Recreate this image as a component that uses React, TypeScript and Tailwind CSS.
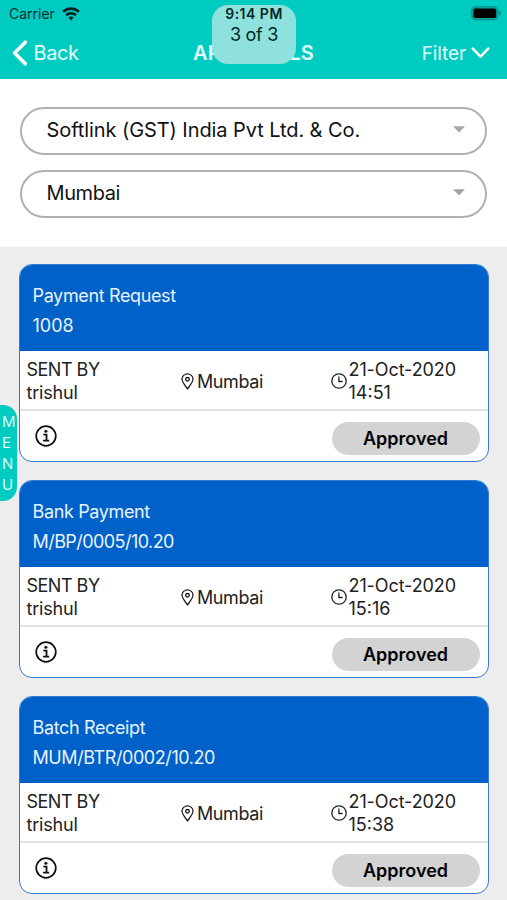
import React from "react";

type Approval = { title: string; number: string; time: string; numberTracking: string };

const approvals: Approval[] = [
  { title: "Payment Request", number: "1008", time: "14:51", numberTracking: "tracking-normal" },
  { title: "Bank Payment", number: "M/BP/0005/10.20", time: "15:16", numberTracking: "tracking-[-0.56px]" },
  { title: "Batch Receipt", number: "MUM/BTR/0002/10.20", time: "15:38", numberTracking: "tracking-[-0.42px]" },
];

function WifiIcon() {
  return (
    <svg width="18" height="14" viewBox="0 0 18 14" fill="none" stroke="#06201f" strokeWidth="2.6">
      <path d="M1.1 4.9C5.6.5 12.4.5 16.9 4.9" />
      <path d="M4.1 8.2c2.8-2.6 7-2.6 9.8 0" />
      <path d="M6.4 10.6a3.8 3.8 0 0 1 5.2 0L9 13.4z" fill="#06201f" stroke="none" />
    </svg>
  );
}

function BatteryIcon() {
  return (
    <svg width="31" height="15" viewBox="0 0 31 15">
      <rect x="0.6" y="0.7" width="26.4" height="13.2" rx="3.8" fill="#04a79f" stroke="#078f89" strokeWidth="1" />
      <rect x="2.4" y="2.6" width="22.8" height="9.4" rx="1.8" fill="#000" />
      <path d="M28.2 4.8c2.4.8 2.4 4.2 0 5z" fill="#078f89" />
    </svg>
  );
}

function PinIcon() {
  return (
    <svg width="13" height="17" viewBox="0 0 13 17" fill="none" stroke="#222" strokeWidth="1.3">
      <path d="M6.5 16C5.1 13.6 1 9.3 1 6.3a5.5 5.5 0 0 1 11 0c0 3-4.1 7.3-5.5 9.7z" strokeLinejoin="round" />
      <circle cx="6.5" cy="6.3" r="1.8" />
    </svg>
  );
}

function ClockIcon() {
  return (
    <svg width="16" height="16" viewBox="0 0 16 16" fill="none" stroke="#222" strokeWidth="1.3">
      <circle cx="8" cy="8" r="7.2" />
      <path d="M7.9 3.5v5h3.8" />
    </svg>
  );
}

function InfoIcon() {
  return (
    <svg width="22" height="22" viewBox="0 0 22 22" fill="none" stroke="#111">
      <circle cx="11" cy="11" r="9.8" strokeWidth="1.7" />
      <circle cx="10.9" cy="6.3" r="1.5" fill="#111" stroke="none" />
      <path d="M8.3 9.7h3.2v5.7M8.1 15.7h6" strokeWidth="1.8" />
    </svg>
  );
}

function Select({ value, tracking }: { value: string; tracking: string }) {
  return (
    <div className="flex h-12 items-center justify-between rounded-full border-2 border-[#b0b0b0] bg-white pr-5 pb-[3px] pl-[24.5px]">
      <span className={`text-[20px] text-[#111] ${tracking}`}>{value}</span>
      <svg width="12" height="7" viewBox="0 0 12 7">
        <path d="M0 .3h12L6 6.6z" fill="#a5a5a5" />
      </svg>
    </div>
  );
}

function Card({ item }: { item: Approval }) {
  return (
    <article className="h-[198px] overflow-hidden rounded-[13px] border border-[#3279d2] bg-white text-[18px] text-[#222]">
      <div className="flex h-[86px] flex-col bg-[#0061c9] pt-4 pl-[13px] leading-[29.5px] text-[#e9f2ff]">
        <span className="tracking-[-0.36px]">{item.title}</span>
        <span className={item.numberTracking}>{item.number}</span>
      </div>
      <div className="flex h-[60px] items-center border-b-2 border-[#e2e2e2] pt-px pl-[7px] leading-[23px]">
        <div className="w-[154px]">
          <div className="tracking-[-0.5px]">SENT BY</div>
          <div className="tracking-[-0.2px]">trishul</div>
        </div>
        <div className="flex w-[150px] items-center gap-[3.5px] pt-px">
          <PinIcon />
          <span className="tracking-[-0.4px]">Mumbai</span>
        </div>
        <div className="flex items-center gap-[2px]">
          <ClockIcon />
          <div>
            <div className="tracking-[-0.1px]">21-Oct-2020</div>
            <div>{item.time}</div>
          </div>
        </div>
      </div>
      <div className="flex justify-between pt-[10.5px] pr-2 pl-[15px]">
        <div className="pt-[3px]">
          <InfoIcon />
        </div>
        <div className="flex h-[33px] w-[148px] items-center justify-center rounded-full bg-[#d3d3d3] pt-px text-[18px] font-semibold text-black">
          Approved
        </div>
      </div>
    </article>
  );
}

export default function App() {
  return (
    <div className="relative h-[900px] w-[507px] overflow-hidden bg-[#ededed] font-['Inter','Liberation_Sans',sans-serif]">
      <header className="h-[79px] bg-[#00cbc1]">
        <div className="flex h-[27px] items-center justify-between pr-[5px] pl-[9px]">
          <div className="flex items-center gap-[7px]">
            <span className="text-[14px] text-[#06302e]">Carrier</span>
            <WifiIcon />
          </div>
          <BatteryIcon />
        </div>
        <div className="grid h-[52px] grid-cols-[1fr_auto_1fr] items-center pr-[17px] pl-[12px] text-[20px] text-[#e3fffc]">
          <div className="flex items-center gap-[5.5px]">
            <svg width="16" height="26" viewBox="0 0 16 26" fill="none" stroke="#fff" strokeWidth="3.6" strokeLinecap="round" strokeLinejoin="round">
              <path d="M13.3 2.2L2.6 13l10.7 10.8" />
            </svg>
            <span className="tracking-[-0.4px]">Back</span>
          </div>
          <span className="pl-[5px] text-[20px] font-semibold tracking-[0.1px]">APPROVALS</span>
          <div className="flex items-center justify-end gap-[5px]">
            <span className="pt-0.5 text-[19px] tracking-[-0.1px]">Filter</span>
            <svg width="19" height="12" viewBox="0 0 19 12" fill="none" stroke="#fff" strokeWidth="2.6" strokeLinecap="round" strokeLinejoin="round">
              <path d="M1.8 1.6l7.7 8 7.7-8" />
            </svg>
          </div>
        </div>
      </header>

      <section className="flex h-[168px] flex-col gap-[15px] bg-white px-5 pt-7">
        <Select value="Softlink (GST) India Pvt Ltd. & Co." tracking="tracking-[-0.08px]" />
        <Select value="Mumbai" tracking="tracking-[-0.4px]" />
      </section>

      <main className="flex flex-col gap-[18px] px-[18.5px] pt-[17px]">
        {approvals.map((item) => (
          <Card key={item.number} item={item} />
        ))}
      </main>

      <div className="absolute top-[5px] left-[212px] flex h-[59px] w-[84px] flex-col items-center rounded-[16px] bg-[#8fe1dd] text-[#062725]">
        <span className="text-[14px] leading-[18px] font-semibold tracking-[0.5px] whitespace-nowrap">9:14 PM</span>
        <span className="text-[18px] leading-[23px] tracking-[-0.3px]">3 of 3</span>
      </div>

      <div className="absolute top-[405px] left-0 flex h-[96px] w-[17px] flex-col justify-center rounded-r-[14px] bg-[#00cbc1] pl-[2px] text-[15px] leading-[21px] text-[#d9fffb]">
        <span>M</span>
        <span>E</span>
        <span>N</span>
        <span>U</span>
      </div>
    </div>
  );
}
